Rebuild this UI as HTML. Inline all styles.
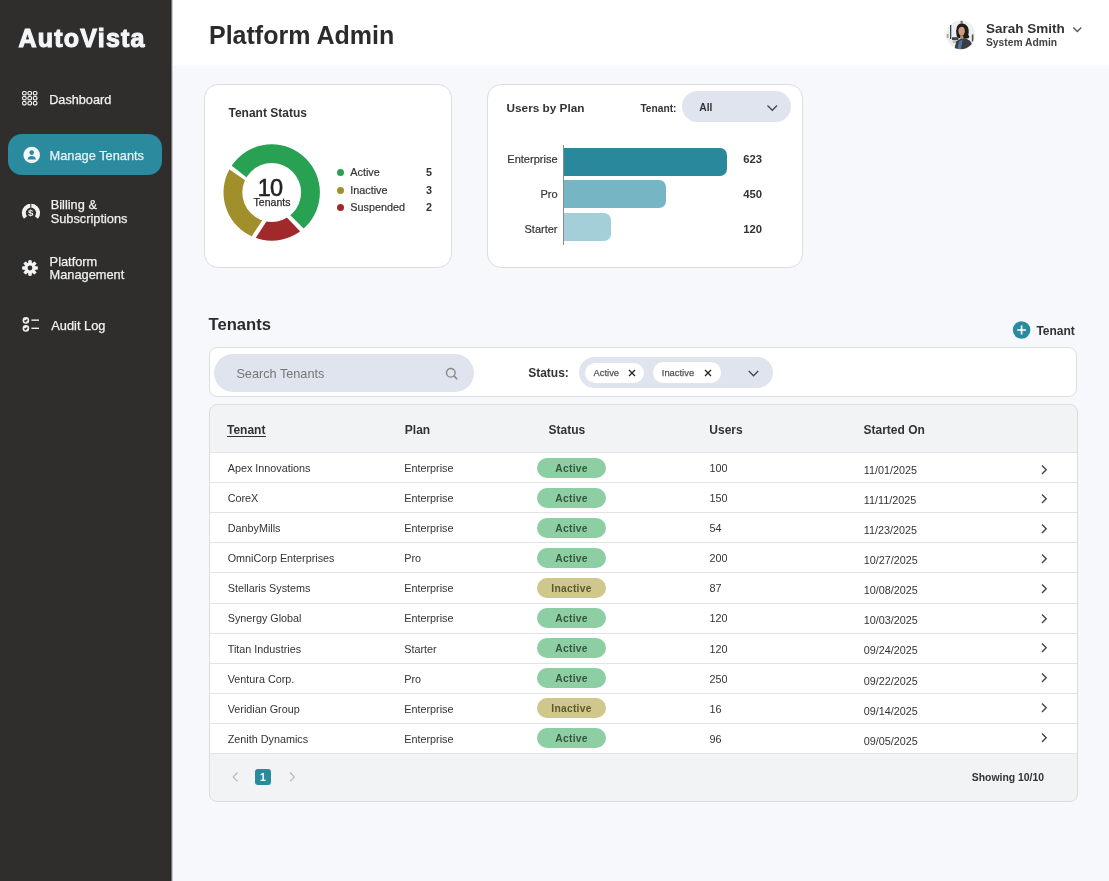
<!DOCTYPE html>
<html><head><meta charset="utf-8"><title>Platform Admin</title>
<style>
html,body{margin:0;padding:0;}
body{width:1109px;height:881px;position:relative;overflow:hidden;background:#f7f8fb;font-family:"Liberation Sans", sans-serif;}
.t{position:absolute;white-space:nowrap;font-family:"Liberation Sans", sans-serif;}
#wrap{position:absolute;left:0;top:0;width:1109px;height:881px;will-change:transform;}
</style></head><body><div id="wrap">
<div style="position:absolute;left:0px;top:0px;width:171px;height:881px;background:#2f2e2d;"></div>
<div class="t" style="left:18.60px;top:25.93px;font-size:25px;line-height:25px;font-weight:700;color:#f4f5f8;letter-spacing:1.2px;-webkit-text-stroke:1.1px #f4f5f8;">AutoVista</div>
<svg style="position:absolute;left:0;top:0" width="171" height="400"><rect x="22.60" y="91.50" width="3.5" height="3.3" rx="1.1" fill="none" stroke="#f2f2f2" stroke-width="1.15"/><rect x="28.00" y="91.50" width="3.5" height="3.3" rx="1.1" fill="none" stroke="#f2f2f2" stroke-width="1.15"/><rect x="33.40" y="91.50" width="3.5" height="3.3" rx="1.1" fill="none" stroke="#f2f2f2" stroke-width="1.15"/><rect x="22.60" y="96.50" width="3.5" height="3.3" rx="1.1" fill="none" stroke="#f2f2f2" stroke-width="1.15"/><rect x="28.00" y="96.50" width="3.5" height="3.3" rx="1.1" fill="none" stroke="#f2f2f2" stroke-width="1.15"/><rect x="33.40" y="96.50" width="3.5" height="3.3" rx="1.1" fill="none" stroke="#f2f2f2" stroke-width="1.15"/><rect x="22.60" y="101.50" width="3.5" height="3.3" rx="1.1" fill="none" stroke="#f2f2f2" stroke-width="1.15"/><rect x="28.00" y="101.50" width="3.5" height="3.3" rx="1.1" fill="none" stroke="#f2f2f2" stroke-width="1.15"/><rect x="33.40" y="101.50" width="3.5" height="3.3" rx="1.1" fill="none" stroke="#f2f2f2" stroke-width="1.15"/></svg>
<div class="t" style="left:49.20px;top:93.85px;font-size:12.7px;line-height:12.7px;font-weight:400;color:#f2f2f2;-webkit-text-stroke:0.25px currentColor;">Dashboard</div>
<div style="position:absolute;left:8px;top:134px;width:154px;height:41px;background:#2a8a9e;border-radius:14px;"></div>
<svg style="position:absolute;left:23px;top:146px" width="18" height="18" viewBox="0 0 18 18">
<circle cx="8.7" cy="9" r="8.3" fill="#f3f7f8"/>
<circle cx="8.7" cy="6.6" r="2.3" fill="#2a8a9e"/>
<path d="M4.6 13.4 Q4.8 9.9 8.7 9.9 Q12.6 9.9 12.8 13.4 Z" fill="#2a8a9e"/>
</svg>
<div class="t" style="left:49.60px;top:150.46px;font-size:12.8px;line-height:12.8px;font-weight:400;color:#e8f2f4;-webkit-text-stroke:0.25px currentColor;">Manage Tenants</div>
<svg style="position:absolute;left:0;top:0" width="171" height="240">
<path d="M23.94 218.78 A9.15 9.15 0 1 1 37.96 218.78 L34.90 216.21 A5.15 5.15 0 1 0 27.00 216.21 Z" fill="#f0f0f0"/>
<rect x="30.3" y="203" width="1" height="5" fill="#2f2e2d"/>
<text x="30.7" y="216.2" font-family="Liberation Sans" font-size="9.6" font-weight="700" fill="#f0f0f0" text-anchor="middle">$</text>
</svg>
<div class="t" style="left:50.70px;top:198.96px;font-size:12.8px;line-height:12.8px;font-weight:400;color:#f0f0f0;-webkit-text-stroke:0.25px currentColor;">Billing &amp;</div>
<div class="t" style="left:50.70px;top:213.16px;font-size:12.8px;line-height:12.8px;font-weight:400;color:#f0f0f0;-webkit-text-stroke:0.25px currentColor;">Subscriptions</div>
<svg style="position:absolute;left:21.8px;top:259.7px" width="16" height="16" viewBox="0 0 16 16">
<polygon points="6.43,2.94 6.79,0.50 9.21,0.50 9.57,2.94 10.47,3.31 12.45,1.84 14.16,3.55 12.69,5.53 13.06,6.43 15.50,6.79 15.50,9.21 13.06,9.57 12.69,10.47 14.16,12.45 12.45,14.16 10.47,12.69 9.57,13.06 9.21,15.50 6.79,15.50 6.43,13.06 5.53,12.69 3.55,14.16 1.84,12.45 3.31,10.47 2.94,9.57 0.50,9.21 0.50,6.79 2.94,6.43 3.31,5.53 1.84,3.55 3.55,1.84 5.53,3.31" fill="#f2f4f5" stroke="#f2f4f5" stroke-width="0.7" stroke-linejoin="round"/>
<circle cx="8" cy="8" r="2.4" fill="#2f2e2d"/>
</svg>
<div class="t" style="left:49.60px;top:255.56px;font-size:12.8px;line-height:12.8px;font-weight:400;color:#f0f0f0;-webkit-text-stroke:0.25px currentColor;">Platform</div>
<div class="t" style="left:49.60px;top:268.96px;font-size:12.8px;line-height:12.8px;font-weight:400;color:#f0f0f0;-webkit-text-stroke:0.25px currentColor;">Management</div>
<svg style="position:absolute;left:21px;top:316px" width="20" height="17" viewBox="0 0 20 17">
<circle cx="4.9" cy="4.4" r="3.3" fill="#f0f0f0"/>
<circle cx="4.9" cy="12.4" r="3.3" fill="#f0f0f0"/>
<path d="M3.4 4.5 L4.6 5.6 L6.3 3.5" fill="none" stroke="#2f2e2d" stroke-width="1.3"/>
<path d="M3.4 12.5 L4.6 13.6 L6.3 11.5" fill="none" stroke="#2f2e2d" stroke-width="1.3"/>
<rect x="10.4" y="3.45" width="7.6" height="1.4" fill="#f0f0f0"/>
<rect x="10.4" y="11.6" width="7.6" height="1.4" fill="#f0f0f0"/>
</svg>
<div class="t" style="left:51.30px;top:319.76px;font-size:12.8px;line-height:12.8px;font-weight:400;color:#f0f0f0;-webkit-text-stroke:0.25px currentColor;">Audit Log</div>
<div style="position:absolute;left:171px;top:0px;width:938px;height:65px;background:#ffffff;"></div>
<div class="t" style="left:209.00px;top:23.03px;font-size:25px;line-height:25px;font-weight:700;color:#2b2b2b;">Platform Admin</div>
<svg style="position:absolute;left:946px;top:20px" width="30" height="30" viewBox="0 0 30 30">
<defs><clipPath id="av"><circle cx="14.7" cy="14.8" r="14.4"/></clipPath>
<filter id="bl" x="-20%" y="-20%" width="140%" height="140%"><feGaussianBlur stdDeviation="0.55"/></filter></defs>
<g clip-path="url(#av)"><g filter="url(#bl)">
<rect x="-2" y="-2" width="34" height="34" fill="#eceff2"/>
<rect x="14.5" y="0.5" width="2.2" height="2.4" fill="#6a7078"/>
<rect x="4" y="5" width="1.3" height="14" fill="#3d4046"/>
<rect x="0.5" y="14" width="2" height="4" fill="#b8a090"/>
<rect x="6" y="17.2" width="6.5" height="2.8" fill="#3b4556"/>
<rect x="6.7" y="20" width="5.2" height="3" fill="#cdbfa6"/>
<rect x="25.8" y="14.5" width="1.6" height="7" fill="#55504c"/>
<path d="M10.6 15.8 Q9.6 10 11 6.6 Q13.2 3 16.8 3.4 Q21.8 4.2 22.6 9.6 Q23 13 22.2 15 Q24.2 16.6 22.4 18.2 Q19.6 19 16.6 18.4 L12.8 18 Q10.9 17.4 10.6 15.8 Z" fill="#231b19"/>
<path d="M12.4 11.4 Q12.2 7.1 15.6 6.8 Q18.9 7 18.8 11.2 Q18.5 15.2 15.6 15.7 Q12.8 15.4 12.4 11.4 Z" fill="#cc9c82"/>
<path d="M14.3 15.5 L17.2 15.5 L17.6 19.5 L13.8 19.5 Z" fill="#c08c72"/>
<path d="M8 31 L10.2 21.5 Q13.5 18.6 18 18.6 Q24 19.2 26 24 L27.5 31 Z" fill="#3a3d43"/>
<path d="M10.8 31 L13.2 21.4 L16.6 19.2 L14.6 31 Z" fill="#4c78a6"/>
</g></g></svg>
<div class="t" style="left:986.00px;top:22.17px;font-size:13.5px;line-height:13.5px;font-weight:700;color:#333333;">Sarah Smith</div>
<div class="t" style="left:986.00px;top:38.08px;font-size:10.3px;line-height:10.3px;font-weight:700;color:#444444;">System Admin</div>
<svg style="position:absolute;left:1072px;top:26px" width="11" height="8"><path d="M1.3 1.5 L5.3 5.5 L9.3 1.5" fill="none" stroke="#555" stroke-width="1.3"/></svg>
<div style="position:absolute;left:171px;top:65px;width:938px;height:816px;background:#f7f8fb;"></div>
<div style="position:absolute;left:171px;top:65px;width:938px;height:1px;background:#fbfbfd;"></div>
<div style="position:absolute;left:170px;top:0px;width:1px;height:881px;background:#292827;"></div>
<div style="position:absolute;left:171px;top:0px;width:1px;height:881px;background:#727273;"></div>
<div style="position:absolute;left:172px;top:0px;width:1px;height:881px;background:#cbccd0;"></div>
<div style="position:absolute;left:204px;top:84px;width:248px;height:184px;background:#fff;border:1px solid #dedede;border-radius:14px;box-sizing:border-box;"></div>
<div class="t" style="left:228.50px;top:106.54px;font-size:12px;line-height:12px;font-weight:700;color:#333333;">Tenant Status</div>
<svg style="position:absolute;left:0;top:0" width="460" height="280"><defs><clipPath id="cg"><polygon points="271.70,192.50 250.85,180.70 193.70,135.70 216.21,121.64 237.71,109.16 261.81,103.05 286.66,103.75 310.36,111.23 331.12,124.90 347.34,143.74 357.80,166.29 361.68,190.84 358.71,215.52 349.09,238.44 342.60,267.40 284.10,208.90"/></clipPath><clipPath id="cr"><polygon points="271.70,192.50 281.05,211.60 337.30,270.10 322.84,266.56 315.38,271.19 307.51,275.07 299.30,278.16 290.83,280.44 282.18,281.89 273.43,282.48 264.66,282.22 255.96,281.11 247.40,279.16 239.08,276.38 224.70,285.40 271.50,213.85"/></clipPath><clipPath id="co"><polygon points="271.70,192.50 267.20,212.90 220.40,283.10 217.28,264.18 208.18,256.26 200.23,247.19 193.55,237.14 188.29,226.29 184.52,214.83 182.31,202.97 181.71,190.93 182.73,178.91 185.35,167.13 189.52,155.81 189.10,141.40 249.40,183.25"/></clipPath></defs><path d="M223.50 192.50 A48.2 48.2 0 1 1 319.90 192.50 A48.2 48.2 0 1 1 223.50 192.50 Z M242.30 192.50 A29.4 29.4 0 1 0 301.10 192.50 A29.4 29.4 0 1 0 242.30 192.50 Z" fill="#29a152" fill-rule="evenodd" clip-path="url(#cg)"/><path d="M223.50 192.50 A48.2 48.2 0 1 1 319.90 192.50 A48.2 48.2 0 1 1 223.50 192.50 Z M242.30 192.50 A29.4 29.4 0 1 0 301.10 192.50 A29.4 29.4 0 1 0 242.30 192.50 Z" fill="#a2292a" fill-rule="evenodd" clip-path="url(#cr)"/><path d="M223.50 192.50 A48.2 48.2 0 1 1 319.90 192.50 A48.2 48.2 0 1 1 223.50 192.50 Z M242.30 192.50 A29.4 29.4 0 1 0 301.10 192.50 A29.4 29.4 0 1 0 242.30 192.50 Z" fill="#a08f2b" fill-rule="evenodd" clip-path="url(#co)"/></svg>
<div class="t" style="left:70.00px;width:400px;text-align:center;top:177.00px;font-size:23.5px;line-height:23.5px;font-weight:400;color:#222222;letter-spacing:-0.9px;-webkit-text-stroke:0.55px #222;">10</div>
<div class="t" style="left:72.00px;width:400px;text-align:center;top:196.71px;font-size:10.5px;line-height:10.5px;font-weight:400;color:#2b2b2b;-webkit-text-stroke:0.25px currentColor;">Tenants</div>
<div style="position:absolute;left:337px;top:168.9px;width:7px;height:7.0px;background:#29a152;border-radius:50%;"></div>
<div class="t" style="left:350.30px;top:166.76px;font-size:10.8px;line-height:10.8px;font-weight:400;color:#333333;-webkit-text-stroke:0.2px #333;">Active</div>
<div class="t" style="right:677.00px;top:166.76px;font-size:10.8px;line-height:10.8px;font-weight:700;color:#333333;">5</div>
<div style="position:absolute;left:337px;top:186.65px;width:7px;height:7.0px;background:#a08f2b;border-radius:50%;"></div>
<div class="t" style="left:350.30px;top:184.51px;font-size:10.8px;line-height:10.8px;font-weight:400;color:#333333;-webkit-text-stroke:0.2px #333;">Inactive</div>
<div class="t" style="right:677.00px;top:184.51px;font-size:10.8px;line-height:10.8px;font-weight:700;color:#333333;">3</div>
<div style="position:absolute;left:337px;top:204.4px;width:7px;height:7.0px;background:#a2292a;border-radius:50%;"></div>
<div class="t" style="left:350.30px;top:202.26px;font-size:10.8px;line-height:10.8px;font-weight:400;color:#333333;-webkit-text-stroke:0.2px #333;">Suspended</div>
<div class="t" style="right:677.00px;top:202.26px;font-size:10.8px;line-height:10.8px;font-weight:700;color:#333333;">2</div>
<div style="position:absolute;left:487px;top:84px;width:316px;height:184px;background:#fff;border:1px solid #dedede;border-radius:14px;box-sizing:border-box;"></div>
<div class="t" style="left:506.50px;top:102.71px;font-size:11.8px;line-height:11.8px;font-weight:700;color:#333333;">Users by Plan</div>
<div class="t" style="left:640.40px;top:103.66px;font-size:10.2px;line-height:10.2px;font-weight:700;color:#333333;">Tenant:</div>
<div style="position:absolute;left:682px;top:91px;width:109px;height:31px;background:#dfe4ee;border-radius:16px;"></div>
<div class="t" style="left:699.30px;top:103.08px;font-size:10.3px;line-height:10.3px;font-weight:700;color:#333333;">All</div>
<svg style="position:absolute;left:766px;top:104px" width="13" height="9"><path d="M1.5 1.5 L6.3 6.3 L11 1.5" fill="none" stroke="#444" stroke-width="1.3"/></svg>
<div style="position:absolute;left:563px;top:145px;width:1px;height:100px;background:#8a8a8a;"></div>
<div style="position:absolute;left:564px;top:148px;width:163px;height:28px;background:#2a889c;border-radius:0 7px 7px 0;"></div>
<div style="position:absolute;left:564px;top:180px;width:102px;height:28px;background:#76b5c4;border-radius:0 7px 7px 0;"></div>
<div style="position:absolute;left:564px;top:213px;width:47px;height:28px;background:#a5cfd8;border-radius:0 7px 7px 0;"></div>
<div class="t" style="right:551.50px;top:153.59px;font-size:11px;line-height:11px;font-weight:400;color:#333333;-webkit-text-stroke:0.2px #333;">Enterprise</div>
<div class="t" style="right:551.50px;top:188.69px;font-size:11px;line-height:11px;font-weight:400;color:#333333;-webkit-text-stroke:0.2px #333;">Pro</div>
<div class="t" style="right:551.50px;top:223.69px;font-size:11px;line-height:11px;font-weight:400;color:#333333;-webkit-text-stroke:0.2px #333;">Starter</div>
<div class="t" style="left:743.20px;top:153.93px;font-size:11.3px;line-height:11.3px;font-weight:700;color:#333333;">623</div>
<div class="t" style="left:743.20px;top:189.43px;font-size:11.3px;line-height:11.3px;font-weight:700;color:#333333;">450</div>
<div class="t" style="left:743.20px;top:224.23px;font-size:11.3px;line-height:11.3px;font-weight:700;color:#333333;">120</div>
<div class="t" style="left:208.50px;top:316.94px;font-size:16.6px;line-height:16.6px;font-weight:700;color:#2b2b2b;">Tenants</div>
<svg style="position:absolute;left:1012px;top:321px" width="19" height="19" viewBox="0 0 19 19">
<circle cx="9.6" cy="9" r="8.8" fill="#2a8a9e"/>
<path d="M9.6 4.6 V13.4 M5.2 9 H14" stroke="#fff" stroke-width="1.7"/>
</svg>
<div class="t" style="left:1036.40px;top:325.24px;font-size:12px;line-height:12px;font-weight:700;color:#333333;">Tenant</div>
<div style="position:absolute;left:209px;top:347px;width:868px;height:50px;background:#fff;border:1px solid #dedede;border-radius:8px;box-sizing:border-box;"></div>
<div style="position:absolute;left:214px;top:354px;width:260px;height:38px;background:#dfe4ee;border-radius:19px;"></div>
<div class="t" style="left:236.40px;top:367.95px;font-size:12.7px;line-height:12.7px;font-weight:400;color:#777777;">Search Tenants</div>
<svg style="position:absolute;left:444px;top:366px" width="16" height="16"><circle cx="6.8" cy="6.8" r="4.3" fill="none" stroke="#888" stroke-width="1.4"/><path d="M9.9 9.9 L13.2 13.2" stroke="#888" stroke-width="1.6"/></svg>
<div class="t" style="left:528.20px;top:366.54px;font-size:12px;line-height:12px;font-weight:700;color:#333333;">Status:</div>
<div style="position:absolute;left:579px;top:357px;width:194px;height:31px;background:#dfe4ee;border-radius:16px;"></div>
<div style="position:absolute;left:585px;top:362.5px;width:59px;height:20.5px;background:#fff;border-radius:10px;"></div>
<div class="t" style="left:593.50px;top:367.94px;font-size:9.4px;line-height:9.4px;font-weight:400;color:#555555;-webkit-text-stroke:0.25px currentColor;">Active</div>
<svg style="position:absolute;left:628px;top:369px" width="8" height="8"><path d="M1 1 L7 7 M7 1 L1 7" stroke="#222" stroke-width="1.3"/></svg>
<div style="position:absolute;left:653px;top:362px;width:68px;height:20.5px;background:#fff;border-radius:10px;"></div>
<div class="t" style="left:661.80px;top:367.54px;font-size:9.4px;line-height:9.4px;font-weight:400;color:#555555;-webkit-text-stroke:0.25px currentColor;">Inactive</div>
<svg style="position:absolute;left:704px;top:369px" width="8" height="8"><path d="M1 1 L7 7 M7 1 L1 7" stroke="#222" stroke-width="1.3"/></svg>
<svg style="position:absolute;left:747px;top:369px" width="13" height="10"><path d="M1.8 2 L6.5 6.8 L11.2 2" fill="none" stroke="#444" stroke-width="1.3"/></svg>
<div style="position:absolute;left:209px;top:404px;width:869px;height:398px;background:#f2f3f5;border:1px solid #dcdcdc;border-radius:8px;box-sizing:border-box;"></div>
<div class="t" style="left:227.00px;top:423.94px;font-size:12px;line-height:12px;font-weight:700;color:#333333;">Tenant</div>
<div class="t" style="left:404.80px;top:423.94px;font-size:12px;line-height:12px;font-weight:700;color:#333333;">Plan</div>
<div class="t" style="left:548.50px;top:423.94px;font-size:12px;line-height:12px;font-weight:700;color:#333333;">Status</div>
<div class="t" style="left:709.30px;top:423.94px;font-size:12px;line-height:12px;font-weight:700;color:#333333;">Users</div>
<div class="t" style="left:863.50px;top:423.94px;font-size:12px;line-height:12px;font-weight:700;color:#333333;">Started On</div>
<div style="position:absolute;left:227px;top:435.5px;width:38.5px;height:1.1999999999999886px;background:#333;"></div>
<div style="position:absolute;left:210px;top:452px;width:867px;height:302px;background:#fff;"></div>
<div style="position:absolute;left:210px;top:452px;width:867px;height:1px;background:#e3e3e3;"></div>
<div style="position:absolute;left:210px;top:482px;width:867px;height:1px;background:#e3e3e3;"></div>
<div style="position:absolute;left:210px;top:512px;width:867px;height:1px;background:#e3e3e3;"></div>
<div style="position:absolute;left:210px;top:542px;width:867px;height:1px;background:#e3e3e3;"></div>
<div style="position:absolute;left:210px;top:572px;width:867px;height:1px;background:#e3e3e3;"></div>
<div style="position:absolute;left:210px;top:603px;width:867px;height:1px;background:#e3e3e3;"></div>
<div style="position:absolute;left:210px;top:633px;width:867px;height:1px;background:#e3e3e3;"></div>
<div style="position:absolute;left:210px;top:663px;width:867px;height:1px;background:#e3e3e3;"></div>
<div style="position:absolute;left:210px;top:693px;width:867px;height:1px;background:#e3e3e3;"></div>
<div style="position:absolute;left:210px;top:723px;width:867px;height:1px;background:#e3e3e3;"></div>
<div style="position:absolute;left:210px;top:753px;width:867px;height:1px;background:#e3e3e3;"></div>
<div class="t" style="left:227.70px;top:462.86px;font-size:10.8px;line-height:10.8px;font-weight:400;color:#333333;">Apex Innovations</div>
<div class="t" style="left:404.30px;top:462.86px;font-size:10.8px;line-height:10.8px;font-weight:400;color:#333333;">Enterprise</div>
<div style="position:absolute;left:537px;top:458.1px;width:69px;height:20.399999999999977px;background:#8dcfa2;border-radius:10px;"></div>
<div class="t" style="left:371.50px;width:400px;text-align:center;top:463.88px;font-size:10.3px;line-height:10.3px;font-weight:700;color:#36563f;letter-spacing:0.25px;">Active</div>
<div class="t" style="left:709.50px;top:462.86px;font-size:10.8px;line-height:10.8px;font-weight:400;color:#333333;">100</div>
<div class="t" style="left:863.80px;top:464.76px;font-size:10.8px;line-height:10.8px;font-weight:400;color:#333333;">11/01/2025</div>
<svg style="position:absolute;left:1040px;top:463.50px" width="9" height="12"><path d="M2 1.5 L6.2 5.8 L2 10.1" fill="none" stroke="#444" stroke-width="1.4"/></svg>
<div class="t" style="left:227.70px;top:492.97px;font-size:10.8px;line-height:10.8px;font-weight:400;color:#333333;">CoreX</div>
<div class="t" style="left:404.30px;top:492.97px;font-size:10.8px;line-height:10.8px;font-weight:400;color:#333333;">Enterprise</div>
<div style="position:absolute;left:537px;top:488.05px;width:69px;height:20.399999999999977px;background:#8dcfa2;border-radius:10px;"></div>
<div class="t" style="left:371.50px;width:400px;text-align:center;top:493.85px;font-size:10.3px;line-height:10.3px;font-weight:700;color:#36563f;letter-spacing:0.25px;">Active</div>
<div class="t" style="left:709.50px;top:492.97px;font-size:10.8px;line-height:10.8px;font-weight:400;color:#333333;">150</div>
<div class="t" style="left:863.80px;top:494.87px;font-size:10.8px;line-height:10.8px;font-weight:400;color:#333333;">11/11/2025</div>
<svg style="position:absolute;left:1040px;top:493.32px" width="9" height="12"><path d="M2 1.5 L6.2 5.8 L2 10.1" fill="none" stroke="#444" stroke-width="1.4"/></svg>
<div class="t" style="left:227.70px;top:523.08px;font-size:10.8px;line-height:10.8px;font-weight:400;color:#333333;">DanbyMills</div>
<div class="t" style="left:404.30px;top:523.08px;font-size:10.8px;line-height:10.8px;font-weight:400;color:#333333;">Enterprise</div>
<div style="position:absolute;left:537px;top:518.0px;width:69px;height:20.399999999999977px;background:#8dcfa2;border-radius:10px;"></div>
<div class="t" style="left:371.50px;width:400px;text-align:center;top:523.82px;font-size:10.3px;line-height:10.3px;font-weight:700;color:#36563f;letter-spacing:0.25px;">Active</div>
<div class="t" style="left:709.50px;top:523.08px;font-size:10.8px;line-height:10.8px;font-weight:400;color:#333333;">54</div>
<div class="t" style="left:863.80px;top:524.98px;font-size:10.8px;line-height:10.8px;font-weight:400;color:#333333;">11/23/2025</div>
<svg style="position:absolute;left:1040px;top:523.14px" width="9" height="12"><path d="M2 1.5 L6.2 5.8 L2 10.1" fill="none" stroke="#444" stroke-width="1.4"/></svg>
<div class="t" style="left:227.70px;top:553.19px;font-size:10.8px;line-height:10.8px;font-weight:400;color:#333333;">OmniCorp Enterprises</div>
<div class="t" style="left:404.30px;top:553.19px;font-size:10.8px;line-height:10.8px;font-weight:400;color:#333333;">Pro</div>
<div style="position:absolute;left:537px;top:547.95px;width:69px;height:20.399999999999977px;background:#8dcfa2;border-radius:10px;"></div>
<div class="t" style="left:371.50px;width:400px;text-align:center;top:553.79px;font-size:10.3px;line-height:10.3px;font-weight:700;color:#36563f;letter-spacing:0.25px;">Active</div>
<div class="t" style="left:709.50px;top:553.19px;font-size:10.8px;line-height:10.8px;font-weight:400;color:#333333;">200</div>
<div class="t" style="left:863.80px;top:555.09px;font-size:10.8px;line-height:10.8px;font-weight:400;color:#333333;">10/27/2025</div>
<svg style="position:absolute;left:1040px;top:552.96px" width="9" height="12"><path d="M2 1.5 L6.2 5.8 L2 10.1" fill="none" stroke="#444" stroke-width="1.4"/></svg>
<div class="t" style="left:227.70px;top:583.30px;font-size:10.8px;line-height:10.8px;font-weight:400;color:#333333;">Stellaris Systems</div>
<div class="t" style="left:404.30px;top:583.30px;font-size:10.8px;line-height:10.8px;font-weight:400;color:#333333;">Enterprise</div>
<div style="position:absolute;left:537px;top:577.9px;width:69px;height:20.399999999999977px;background:#cfc78c;border-radius:10px;"></div>
<div class="t" style="left:371.50px;width:400px;text-align:center;top:583.76px;font-size:10.3px;line-height:10.3px;font-weight:700;color:#5d5834;letter-spacing:0.25px;">Inactive</div>
<div class="t" style="left:709.50px;top:583.30px;font-size:10.8px;line-height:10.8px;font-weight:400;color:#333333;">87</div>
<div class="t" style="left:863.80px;top:585.20px;font-size:10.8px;line-height:10.8px;font-weight:400;color:#333333;">10/08/2025</div>
<svg style="position:absolute;left:1040px;top:582.78px" width="9" height="12"><path d="M2 1.5 L6.2 5.8 L2 10.1" fill="none" stroke="#444" stroke-width="1.4"/></svg>
<div class="t" style="left:227.70px;top:613.41px;font-size:10.8px;line-height:10.8px;font-weight:400;color:#333333;">Synergy Global</div>
<div class="t" style="left:404.30px;top:613.41px;font-size:10.8px;line-height:10.8px;font-weight:400;color:#333333;">Enterprise</div>
<div style="position:absolute;left:537px;top:607.85px;width:69px;height:20.399999999999977px;background:#8dcfa2;border-radius:10px;"></div>
<div class="t" style="left:371.50px;width:400px;text-align:center;top:613.73px;font-size:10.3px;line-height:10.3px;font-weight:700;color:#36563f;letter-spacing:0.25px;">Active</div>
<div class="t" style="left:709.50px;top:613.41px;font-size:10.8px;line-height:10.8px;font-weight:400;color:#333333;">120</div>
<div class="t" style="left:863.80px;top:615.31px;font-size:10.8px;line-height:10.8px;font-weight:400;color:#333333;">10/03/2025</div>
<svg style="position:absolute;left:1040px;top:612.60px" width="9" height="12"><path d="M2 1.5 L6.2 5.8 L2 10.1" fill="none" stroke="#444" stroke-width="1.4"/></svg>
<div class="t" style="left:227.70px;top:643.52px;font-size:10.8px;line-height:10.8px;font-weight:400;color:#333333;">Titan Industries</div>
<div class="t" style="left:404.30px;top:643.52px;font-size:10.8px;line-height:10.8px;font-weight:400;color:#333333;">Starter</div>
<div style="position:absolute;left:537px;top:637.8px;width:69px;height:20.40000000000009px;background:#8dcfa2;border-radius:10px;"></div>
<div class="t" style="left:371.50px;width:400px;text-align:center;top:643.70px;font-size:10.3px;line-height:10.3px;font-weight:700;color:#36563f;letter-spacing:0.25px;">Active</div>
<div class="t" style="left:709.50px;top:643.52px;font-size:10.8px;line-height:10.8px;font-weight:400;color:#333333;">120</div>
<div class="t" style="left:863.80px;top:645.42px;font-size:10.8px;line-height:10.8px;font-weight:400;color:#333333;">09/24/2025</div>
<svg style="position:absolute;left:1040px;top:642.42px" width="9" height="12"><path d="M2 1.5 L6.2 5.8 L2 10.1" fill="none" stroke="#444" stroke-width="1.4"/></svg>
<div class="t" style="left:227.70px;top:673.63px;font-size:10.8px;line-height:10.8px;font-weight:400;color:#333333;">Ventura Corp.</div>
<div class="t" style="left:404.30px;top:673.63px;font-size:10.8px;line-height:10.8px;font-weight:400;color:#333333;">Pro</div>
<div style="position:absolute;left:537px;top:667.75px;width:69px;height:20.399999999999977px;background:#8dcfa2;border-radius:10px;"></div>
<div class="t" style="left:371.50px;width:400px;text-align:center;top:673.67px;font-size:10.3px;line-height:10.3px;font-weight:700;color:#36563f;letter-spacing:0.25px;">Active</div>
<div class="t" style="left:709.50px;top:673.63px;font-size:10.8px;line-height:10.8px;font-weight:400;color:#333333;">250</div>
<div class="t" style="left:863.80px;top:675.53px;font-size:10.8px;line-height:10.8px;font-weight:400;color:#333333;">09/22/2025</div>
<svg style="position:absolute;left:1040px;top:672.24px" width="9" height="12"><path d="M2 1.5 L6.2 5.8 L2 10.1" fill="none" stroke="#444" stroke-width="1.4"/></svg>
<div class="t" style="left:227.70px;top:703.74px;font-size:10.8px;line-height:10.8px;font-weight:400;color:#333333;">Veridian Group</div>
<div class="t" style="left:404.30px;top:703.74px;font-size:10.8px;line-height:10.8px;font-weight:400;color:#333333;">Enterprise</div>
<div style="position:absolute;left:537px;top:697.7px;width:69px;height:20.399999999999977px;background:#cfc78c;border-radius:10px;"></div>
<div class="t" style="left:371.50px;width:400px;text-align:center;top:703.64px;font-size:10.3px;line-height:10.3px;font-weight:700;color:#5d5834;letter-spacing:0.25px;">Inactive</div>
<div class="t" style="left:709.50px;top:703.74px;font-size:10.8px;line-height:10.8px;font-weight:400;color:#333333;">16</div>
<div class="t" style="left:863.80px;top:705.64px;font-size:10.8px;line-height:10.8px;font-weight:400;color:#333333;">09/14/2025</div>
<svg style="position:absolute;left:1040px;top:702.06px" width="9" height="12"><path d="M2 1.5 L6.2 5.8 L2 10.1" fill="none" stroke="#444" stroke-width="1.4"/></svg>
<div class="t" style="left:227.70px;top:733.85px;font-size:10.8px;line-height:10.8px;font-weight:400;color:#333333;">Zenith Dynamics</div>
<div class="t" style="left:404.30px;top:733.85px;font-size:10.8px;line-height:10.8px;font-weight:400;color:#333333;">Enterprise</div>
<div style="position:absolute;left:537px;top:727.65px;width:69px;height:20.399999999999977px;background:#8dcfa2;border-radius:10px;"></div>
<div class="t" style="left:371.50px;width:400px;text-align:center;top:733.61px;font-size:10.3px;line-height:10.3px;font-weight:700;color:#36563f;letter-spacing:0.25px;">Active</div>
<div class="t" style="left:709.50px;top:733.85px;font-size:10.8px;line-height:10.8px;font-weight:400;color:#333333;">96</div>
<div class="t" style="left:863.80px;top:735.75px;font-size:10.8px;line-height:10.8px;font-weight:400;color:#333333;">09/05/2025</div>
<svg style="position:absolute;left:1040px;top:731.88px" width="9" height="12"><path d="M2 1.5 L6.2 5.8 L2 10.1" fill="none" stroke="#444" stroke-width="1.4"/></svg>
<svg style="position:absolute;left:231px;top:771px" width="9" height="12"><path d="M6.5 1.5 L2.2 5.9 L6.5 10.3" fill="none" stroke="#b5b5b5" stroke-width="1.1"/></svg>
<div style="position:absolute;left:255px;top:769px;width:16px;height:16px;background:#2a8a9e;border-radius:3px;"></div>
<div class="t" style="left:63.00px;width:400px;text-align:center;top:772.11px;font-size:10.5px;line-height:10.5px;font-weight:700;color:#ffffff;">1</div>
<svg style="position:absolute;left:288px;top:771px" width="9" height="12"><path d="M2 1.5 L6.3 5.9 L2 10.3" fill="none" stroke="#b5b5b5" stroke-width="1.1"/></svg>
<div class="t" style="left:971.80px;top:772.69px;font-size:10.4px;line-height:10.4px;font-weight:700;color:#333333;">Showing 10/10</div>
</div></body></html>
